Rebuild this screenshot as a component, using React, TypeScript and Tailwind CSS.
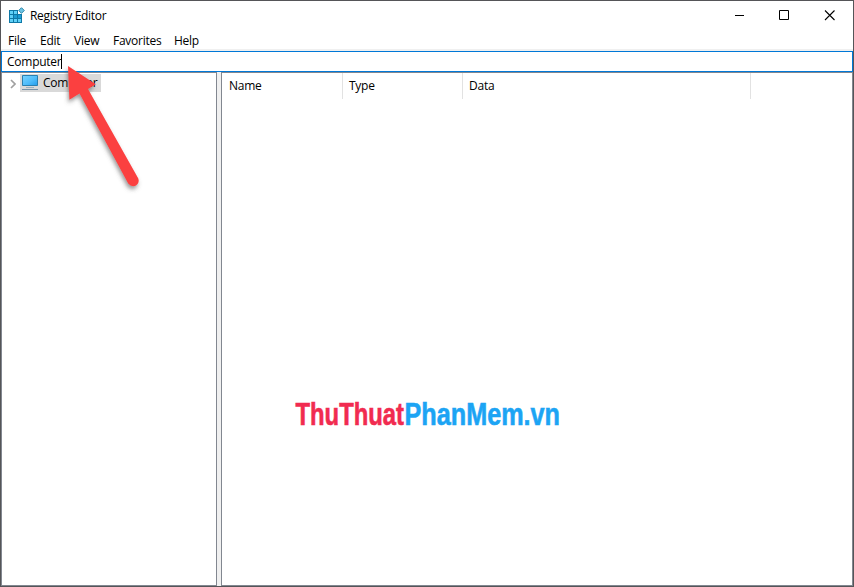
const menuItems = [
  { label: 'File', style: 'w-[32px]' },
  { label: 'Edit', style: 'w-[34px]' },
  { label: 'View', style: 'w-[39px]' },
  { label: 'Favorites', style: 'w-[61px]' },
  { label: 'Help', style: 'w-[40px]' },
];

const columns = [
  { label: 'Name', width: 'w-[121px] pl-[7px]' },
  { label: 'Type', width: 'w-[120px] pl-[6px]' },
  { label: 'Data', width: 'w-[288px] pl-[6px]' },
];

function RegistryIcon() {
  return (
    <svg width="17" height="17" viewBox="0 0 17 17" className="shrink-0">
      <path d="M0 3h9v4h4v9H0z" fill="#0f78a6" />
      <path d="M1 4h3v3H1zM5 4h3v3H5zM1 8h3v3H1zM1 12h3v3H1zM5 12h3v3H5zM9 12h3v3H9z" fill="#5fd0f7" />
      <path d="M5 8h3v3H5zM9 8h3v3H9z" fill="#1c9bd2" />
      <path d="M12.500 .7L15.300 3.500L12.500 6.300L9.700 3.500z" fill="#6cc4e4" stroke="#2c86a8" />
    </svg>
  );
}

function ComputerIcon() {
  return (
    <svg width="17" height="16" viewBox="0 0 17 16" className="shrink-0">
      <defs>
        <linearGradient id="screen" x1="0" y1="0" x2="1" y2="1">
          <stop stopColor="#79d3ff" />
          <stop offset=".55" stopColor="#4fbdfb" />
          <stop offset="1" stopColor="#229bea" />
        </linearGradient>
      </defs>
      <path d="M.5 .5h15v10H.5z" fill="url(#screen)" stroke="#297fb0" />
      <path d="M4 12.500h8" stroke="#9ab1bf" />
      <path d="M0 14.500h16" stroke="#7893a8" />
    </svg>
  );
}

function PointerArrow() {
  return (
    <svg width="90" height="140" viewBox="60 58 90 140" className="pointer-events-none absolute left-[59px] top-[57px] z-10">
      <defs>
        <filter id="shadow" x="-30%" y="-20%" width="160%" height="150%">
          <feDropShadow dx="-1" dy="3" stdDeviation="2" floodColor="#555" floodOpacity=".6" />
        </filter>
      </defs>
      <path
        d="M68 66L95.8 84.3L88 89L138.300 178.500Q139.800 182.500 136 185.500Q131.500 187.500 128.200 183.500L79.500 93.500L69.400 99.800Z"
        fill="#fb4141"
        filter="url(#shadow)"
      />
    </svg>
  );
}

export default function App() {
  return (
    <div className="relative flex h-[587px] w-[854px] flex-col border border-[#555558] bg-white font-['Open_Sans','Noto_Sans',sans-serif] text-[12px] leading-[16px] text-black">
      <header className="flex h-[29px] shrink-0 justify-between">
        <div className="flex pl-[8px] pt-[6px]">
          <RegistryIcon />
          <h1 className="ml-[4px] mt-px whitespace-nowrap tracking-[-0.33px]">Registry Editor</h1>
        </div>
        <svg width="118" height="29" viewBox="735 1 118 29" stroke="#000" fill="none">
          <path d="M734 15.500h10" />
          <path d="M779.500 10.500h9v9h-9z" />
          <path d="M825 10.500l9.500 9.500M834.500 10.500l-9.500 9.500" strokeWidth="1.100" />
        </svg>
      </header>

      <nav className="flex h-[19px] shrink-0 pl-[7px] pt-[3px]">
        {menuItems.map((item) => (
          <span key={item.label} className={`shrink-0 whitespace-nowrap tracking-[-0.25px] ${item.style}`}>
            {item.label}
          </span>
        ))}
      </nav>
      <div className="h-[2px] shrink-0 bg-[#f0f0f0]" />

      <div className="flex h-[21px] shrink-0 items-center border border-[#0078d7] pl-[5px]">
        <span className="w-[54px] tracking-[-0.25px]">Computer</span>
        <span className="h-[15px] w-px bg-black" />
      </div>

      <main className="flex min-h-0 flex-1 bg-[#f0f0f0]">
        <aside className="w-[216px] shrink-0 border border-[#828790] bg-white">
          <div className="flex h-[19px] items-center pl-[8px]">
            <svg width="6" height="10" viewBox="0 0 6 10" className="mt-[3px]">
              <path d="M1 1l4 4-4 4" fill="none" stroke="#a0a0a0" strokeWidth="1.700" />
            </svg>
            <div className="ml-[4px] flex h-[18px] w-[81px] items-center bg-[#d9d9d9] pl-[2px]">
              <ComputerIcon />
              <span className="ml-[4px] tracking-[-0.25px]">Computer</span>
            </div>
          </div>
        </aside>
        <section className="ml-[4px] flex-1 border border-[#828790] bg-white">
          <div className="flex h-[26px]">
            {columns.map((column) => (
              <div key={column.label} className={`shrink-0 border-r border-[#e2e2e2] pt-[5px] tracking-[-0.25px] ${column.width}`}>
                {column.label}
              </div>
            ))}
          </div>
          <svg
            width="280"
            height="40"
            viewBox="0 0 280 40"
            strokeWidth="0.6"
            className="ml-[66px] mt-[296px] font-['Liberation_Sans_Narrow','Liberation_Sans',sans-serif] text-[31px] font-bold"
          >
            <text x="7.500" y="29.700" textLength="108.500" lengthAdjust="spacingAndGlyphs" fill="#f12b50" stroke="#f12b50">
              ThuThuat
            </text>
            <text x="116.500" y="29.700" textLength="155.500" lengthAdjust="spacingAndGlyphs" fill="#1ca4f4" stroke="#1ca4f4">
              PhanMem.vn
            </text>
          </svg>
        </section>
      </main>
      <PointerArrow />
    </div>
  );
}
